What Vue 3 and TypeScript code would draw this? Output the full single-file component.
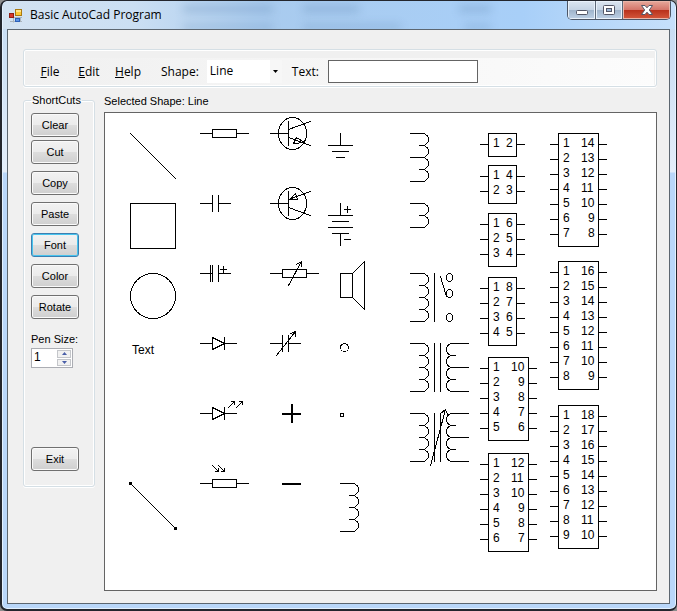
<script setup lang="ts">
import { computed, ref } from 'vue'

interface Chip {
  x: number
  y: number
  rows: number
  width: number
}

interface Placed {
  x: number
  y: number
  d: string
}

const shapes = ['Line', 'Rectangle', 'Circle', 'Text', 'Resistor', 'Capacitor', 'Diode']
const shape = ref('Line')
const label = ref('')
const penSize = ref(1)
const active = ref('Font')
const shortcuts = ['Clear', 'Cut', 'Copy', 'Paste', 'Font', 'Color', 'Rotate']

const resistor = 'M0 0H12M12 -4H36V4H12ZM36 0H48'
const capacitor = 'M0 0H12M12 -8V8M18 -8V8M18 0H30'
const diode = 'M0 0H12M12 -6V6L24 0ZM24 -6V6M24 0H36'
const transistor = 'M0 0H18M18 -12V12M18 -4L40 -12M18 4L40 12M8 0A14 16 0 0 1 36 0A14 16 0 0 1 8 0'

// Winding with one 12px turn per entry; taps listed in `full` reach the terminal.
function coil(turns: number, full: number[]): string {
  let d = ''
  for (let i = 0; i < turns; i++) d += `M12 ${i * 12}a6 6 0 0 1 0 12`
  for (let i = 0; i <= turns; i++) d += `M${full.includes(i) ? 0 : 9} ${i * 12}H12`
  return d
}

function mirroredCoil(turns: number, full: number[]): string {
  let d = ''
  for (let i = 0; i < turns; i++) d += `M42 ${i * 12}a6 6 0 0 0 0 12`
  for (let i = 0; i <= turns; i++) d += `M42 ${i * 12}H${full.includes(i) ? 58 : 45}`
  return d
}

const transformer = coil(4, [0, 4]) + 'M24 0V48M30 0V48' + mirroredCoil(4, [0, 2, 4])

const symbols: Placed[] = [
  { x: 25, y: 20, d: 'M0 0L45 45' },
  { x: 25, y: 90, d: 'M0 0H45V45H0Z' },
  { x: 25, y: 160, d: 'M0 22.5A22.5 22.5 0 0 1 45 22.5A22.5 22.5 0 0 1 0 22.5' },
  { x: 25, y: 370, d: 'M0 0L45 45M-1 -1H1V1H-1ZM-1 0H1M44 44H46V46H44ZM44 45H46' },
  { x: 95, y: 20, d: resistor },
  { x: 95, y: 90, d: capacitor },
  { x: 95, y: 160, d: capacitor + 'M10 -8V8M20 -4H26M23 -7V-1' },
  { x: 95, y: 230, d: diode },
  { x: 95, y: 300, d: diode + 'M28 -6L34 -12M31 -12H34V-9M36 -6L42 -12M39 -12H42V-9' },
  { x: 95, y: 370, d: resistor + 'M12 -18L18 -12M15 -12H18V-15M18 -18L24 -12M21 -12H24V-15' },
  { x: 165, y: 20, d: transistor + 'M26 4L34 9L23 10Z' },
  { x: 165, y: 90, d: transistor + 'M19 -4L25 -10L27 -4Z' },
  { x: 165, y: 160, d: resistor + 'M18 12L31 -12M26 -9L31 -12V-7' },
  { x: 165, y: 230, d: capacitor + 'M6 12L25 -12M20 -10L25 -12V-7' },
  { x: 235, y: 20, d: 'M0 0V12M-12 12H12M-8 18H8M-4 24H4' },
  { x: 235, y: 90, d: 'M0 0V12M-12 12H12M-8 18H8M-12 24H12M-8 30H8M0 30V42M4 6H10M7 3V9M4 36H10' },
  { x: 235, y: 160, d: 'M0 0H12V24H0ZM12 0L24 -12V36L12 24' },
  { x: 235, y: 230, d: 'M0 4A4 4 0 0 1 8 4A4 4 0 0 1 0 4' },
  { x: 235, y: 300, d: 'M0 0H3V3H0Z' },
  { x: 235, y: 370, d: coil(4, [0, 4]) },
  { x: 305, y: 20, d: coil(4, [0, 2, 4]) },
  { x: 305, y: 90, d: coil(2, [0, 2]) },
  {
    x: 305,
    y: 160,
    d:
      coil(4, [0, 4]) +
      'M24 0V48M30 3L36 23' +
      [4, 20, 44].map((y) => `M36 ${y}A3 4 0 0 1 42 ${y}A3 4 0 0 1 36 ${y}`).join('')
  },
  { x: 305, y: 230, d: transformer },
  { x: 305, y: 300, d: transformer + 'M20 52L35 -4M30 0L35 -4L37 1' }
]

const chips: Chip[] = [
  { x: 383, y: 20, rows: 1, width: 28 },
  { x: 383, y: 52, rows: 2, width: 28 },
  { x: 383, y: 100, rows: 3, width: 28 },
  { x: 383, y: 164, rows: 4, width: 28 },
  { x: 383, y: 244, rows: 5, width: 40 },
  { x: 383, y: 340, rows: 6, width: 40 },
  { x: 453, y: 20, rows: 7, width: 40 },
  { x: 453, y: 148, rows: 8, width: 40 },
  { x: 453, y: 292, rows: 9, width: 40 }
]

const drawnChips = computed(() =>
  chips.map((c) => {
    const pins = Array.from({ length: c.rows }, (_, i) => ({
      y: 14 + i * 15,
      left: i + 1,
      right: c.rows * 2 - i,
      rightX: c.width === 28 ? 18 : c.rows * 2 - i > 9 ? 23 : 30
    }))
    let d = `M0 0H${c.width}V${8 + c.rows * 15}H0Z`
    for (let i = 0; i < c.rows; i++) d += `M-8 ${11 + i * 15}h8M${c.width} ${11 + i * 15}h8`
    return { ...c, pins, d }
  })
)

function step(by: number) {
  penSize.value = Math.max(1, penSize.value + by)
}
</script>

<template>
  <div class="window">
    <header class="titlebar">
      <svg class="glass" aria-hidden="true">
        <g class="smudge">
          <rect x="180" y="4" width="90" height="8" />
          <rect x="300" y="4" width="56" height="8" />
          <rect x="456" y="4" width="32" height="8" />
          <rect x="180" y="23" width="90" height="6" />
          <rect x="300" y="23" width="98" height="6" />
          <rect x="462" y="23" width="26" height="6" />
        </g>
      </svg>
      <svg class="app-icon" width="14" height="14" viewBox="0 0 14 14" aria-hidden="true">
        <path d="M1 8.500H13M4.500 4V13.500M11.500 8V13M1 12.500H13" stroke="#a9b4bd" fill="none" />
        <rect x=".5" y="4.500" width="4" height="4" fill="#d8372b" stroke="#8f1d14" />
        <rect x="6.500" y=".5" width="6" height="6" fill="#fbc834" stroke="#a97a12" />
        <path d="M7 1H12V3H7Z" fill="#ffe48a" />
        <rect x="6.500" y="9.500" width="4" height="3" fill="#5b93e4" stroke="#2b5fb8" />
      </svg>
      <h1>Basic AutoCad Program</h1>
      <div class="caption-buttons">
        <button type="button" class="cap min" aria-label="Minimize">
          <svg width="14" height="14" viewBox="0 0 14 14"><rect x="1.500" y="7.500" width="11" height="4" rx="1" fill="#fff" stroke="#535666" /></svg>
        </button>
        <button type="button" class="cap max" aria-label="Maximize">
          <svg width="14" height="14" viewBox="0 0 14 14">
            <rect x="1.500" y="2.500" width="11" height="9" rx="1" fill="#fff" stroke="#535666" />
            <rect x="4.500" y="5.500" width="5" height="3" fill="#9db8d6" stroke="#535666" />
          </svg>
        </button>
        <button type="button" class="cap close" aria-label="Close">
          <svg width="14" height="14" viewBox="0 0 14 14">
            <path d="M1.500 2.500H5L7 4.800L9 2.500H12.500L9.300 7L12.500 11.500H9L7 9.200L5 11.500H1.500L4.700 7Z" fill="#fff" stroke="#535666" />
          </svg>
        </button>
      </div>
    </header>

    <main class="client">
      <div class="toolbar">
        <nav class="strip">
          <button type="button" class="menu"><u>F</u>ile</button>
          <button type="button" class="menu"><u>E</u>dit</button>
          <button type="button" class="menu"><u>H</u>elp</button>
          <label class="caption" for="shape">Shape:</label>
          <span class="combo">
            <select id="shape" v-model="shape">
              <option v-for="s in shapes" :key="s">{{ s }}</option>
            </select>
            <svg class="arrow" width="5" height="3" viewBox="0 0 5 3" aria-hidden="true"><path d="M0 0H5L2.500 3Z" /></svg>
          </span>
          <label class="caption text-caption" for="label">Text:</label>
          <input id="label" v-model="label" class="text-box" type="text" />
        </nav>
      </div>

      <div class="body">
        <fieldset class="side">
          <legend>ShortCuts</legend>
          <button
            v-for="s in shortcuts"
            :key="s"
            type="button"
            class="push"
            :class="{ focused: s === active }"
            @click="active = s"
          >
            {{ s }}
          </button>
          <label class="pen-label" for="pen">Pen Size:</label>
          <div class="spinner">
            <input id="pen" v-model.number="penSize" type="number" min="1" />
            <div class="steps">
              <button type="button" aria-label="Increase" @click="step(1)">
                <svg width="5" height="3" viewBox="0 0 5 3"><path d="M0 3H5L2.500 0Z" /></svg>
              </button>
              <button type="button" aria-label="Decrease" @click="step(-1)">
                <svg width="5" height="3" viewBox="0 0 5 3"><path d="M0 0H5L2.500 3Z" /></svg>
              </button>
            </div>
          </div>
          <button type="button" class="push exit">Exit</button>
        </fieldset>

        <section class="work">
          <p class="status">Selected Shape: {{ shape }}</p>
          <div class="canvas">
            <svg class="drawing" width="551" height="477">
              <g class="ink">
                <path v-for="(s, i) in symbols" :key="i" :d="s.d" :transform="`translate(${s.x} ${s.y})`" />
                <path class="bold" d="M176.500 300.500h19M186.500 290.500v19M176.500 370.500h19" />
                <path v-for="(c, i) in drawnChips" :key="`c${i}`" :d="c.d" :transform="`translate(${c.x} ${c.y})`" />
              </g>
              <text x="27" y="241">Text</text>
              <g v-for="(c, i) in drawnChips" :key="`p${i}`" :transform="`translate(${c.x} ${c.y})`">
                <template v-for="p in c.pins" :key="p.left">
                  <text x="5" :y="p.y">{{ p.left }}</text>
                  <text :x="p.rightX" :y="p.y">{{ p.right }}</text>
                </template>
              </g>
            </svg>
          </div>
        </section>
      </div>
    </main>
  </div>
</template>

<style>
body {
  background: #8d8d8d;
}
</style>

<style scoped>
* {
  box-sizing: border-box;
}

.window {
  display: flex;
  flex-direction: column;
  min-height: 100vh;
  padding: 0 6px 5px 5px;
  border: solid #23262d;
  border-width: 1px 1px 2px 2px;
  border-radius: 7px;
  background: linear-gradient(#c3daf2 0, #d3e4f6 90px, #e4eefa 171px, #b9d7fa 172px, #b9d7fa 100%);
  box-shadow: inset 0 0 0 1px #e3f1ff;
  font-family: "Liberation Sans", Arial, sans-serif;
  font-size: 11px;
  color: #000;
}

.titlebar {
  position: relative;
  display: flex;
  align-items: flex-start;
  height: 28px;
  margin: 0 -5px 0 -4px;
  padding-left: 6px;
  border-radius: 6px 6px 0 0;
  background: linear-gradient(90deg, #d3e2f1 0, #cbdff3 130px, #a9cbee 260px, #a8cff8 520px, #c6e0fb 100%);
  overflow: hidden;
}

.glass {
  position: absolute;
  inset: 0;
  width: 100%;
  height: 100%;
}

.smudge {
  fill: #6289b4;
  opacity: 0.3;
  filter: blur(4px);
}

.app-icon {
  position: relative;
  margin-top: 8px;
}

h1 {
  position: relative;
  margin: 5px 0 0 7px;
  font: 12px/18px "Open Sans", "Noto Sans", sans-serif;
}

.caption-buttons {
  position: relative;
  display: flex;
  margin: 0 4px 0 auto;
  border: 1px solid #4c5666;
  border-top: 0;
  border-radius: 0 0 5px 5px;
  overflow: hidden;
}

.cap {
  display: flex;
  align-items: center;
  justify-content: center;
  width: 28px;
  height: 18px;
  padding: 0;
  border: 0;
  border-right: 1px solid #5c6878;
  background: linear-gradient(#dce6f1 0, #c5d3e3 50%, #9fb4cb 51%, #bed1e6 100%);
  box-shadow: inset 0 0 0 1px #e9f1fa;
}

.cap.max {
  width: 27px;
}

.cap.close {
  width: 47px;
  border-right: 0;
  background: linear-gradient(#e7a99c 0, #d5766a 48%, #b9321c 52%, #d5583c 100%);
  box-shadow: inset 0 0 0 1px #eab5a8;
}

.client {
  display: flex;
  flex: 1;
  flex-direction: column;
  padding: 19px 12px 12px 15px;
  border: 1px solid #5c6670;
  background: #f0f0f0;
}

.toolbar {
  height: 38px;
  padding: 8px 2px 1px;
  border: 1px solid #d5dfe5;
  border-radius: 3px;
  box-shadow: inset 0 0 0 1px #fff, 0 1px 0 #fff;
}

.strip {
  display: flex;
  align-items: center;
  height: 27px;
  padding-left: 5px;
  background: linear-gradient(90deg, #f0f0f0, #fcfcfc);
  font: 12px/18px "Open Sans", "Noto Sans", sans-serif;
}

.menu {
  width: 38px;
  padding: 0;
  border: 0;
  background: none;
  font: inherit;
  text-align: center;
}

.menu + .menu {
  margin-left: 1px;
}

.caption {
  margin-left: 14px;
}

.combo {
  position: relative;
  width: 75px;
  height: 23px;
  margin-left: 8px;
}

.combo select {
  width: 100%;
  height: 100%;
  padding: 0 0 2px 3px;
  border: 0;
  background: linear-gradient(90deg, #fff 63px, #f7f7f7 63px);
  appearance: none;
  font: inherit;
  color: inherit;
}

.arrow {
  position: absolute;
  top: 10px;
  right: 4px;
}

.text-caption {
  margin-left: 10px;
}

.text-box {
  width: 150px;
  height: 23px;
  margin-left: 9px;
  padding: 0 3px;
  border: 1px solid #646464;
  background: #fff;
  font: inherit;
}

.body {
  display: flex;
  flex: 1;
  gap: 9px;
  margin-top: 7px;
}

.side {
  display: flex;
  flex: none;
  flex-direction: column;
  align-items: flex-start;
  align-self: flex-start;
  width: 72px;
  min-width: 0;
  margin: 0;
  padding: 6px 0 15px 7px;
  border: 1px solid #d5dfe5;
  border-radius: 3px;
  box-shadow: inset 0 0 0 1px #fff, 0 1px 0 #fff;
}

legend {
  padding: 0 1px;
  line-height: 13px;
}

.push {
  width: 48px;
  height: 24px;
  margin-top: 7px;
  padding: 0;
  border: 1px solid #707070;
  border-radius: 3px;
  background: linear-gradient(#f2f2f2 0, #ebebeb 50%, #dddddd 51%, #cfcfcf 100%);
  box-shadow: inset 0 0 0 1px #fafafa;
  font: inherit;
  color: inherit;
}

.push:first-of-type {
  margin-top: 0;
}

.push:nth-of-type(2) {
  margin-top: 3px;
}

.push.focused {
  border-color: #3c7fb1;
  box-shadow: inset 0 0 0 1px #48c4ee;
}

.pen-label {
  margin-top: 13px;
  line-height: 14px;
}

.spinner {
  display: flex;
  width: 42px;
  height: 20px;
  margin-top: 2px;
  padding: 1px;
  border: 1px solid #abadb3;
  background: #fff;
}

.spinner input {
  width: 24px;
  min-width: 0;
  padding: 0 0 2px 1px;
  border: 0;
  appearance: textfield;
  font: inherit;
  font-size: 12px;
}

.spinner input::-webkit-inner-spin-button {
  appearance: none;
}

.steps {
  display: flex;
  flex: 1;
  flex-direction: column;
  gap: 1px;
}

.steps button {
  display: flex;
  flex: 1;
  align-items: center;
  justify-content: center;
  min-height: 0;
  padding: 0;
  border: 1px solid #c4c6ca;
  background: #f1f1f1;
}

.steps path {
  fill: #4a5fa8;
}

.push.exit {
  margin-top: 79px;
}

.work {
  display: flex;
  flex: 1;
  flex-direction: column;
  min-width: 0;
}

.status {
  margin: 0 0 4px;
  line-height: 14px;
}

.canvas {
  flex: 1;
  min-height: 0;
  border: 1px solid #646464;
  background: #fff;
  overflow: hidden;
}

.drawing {
  display: block;
}

.drawing text {
  font-size: 12px;
}

.ink {
  fill: none;
  stroke: #000;
  stroke-linecap: square;
  shape-rendering: crispEdges;
  transform: translate(0.5px, 0.5px);
}

.ink .bold {
  stroke-width: 2px;
  stroke-linecap: butt;
}
</style>
